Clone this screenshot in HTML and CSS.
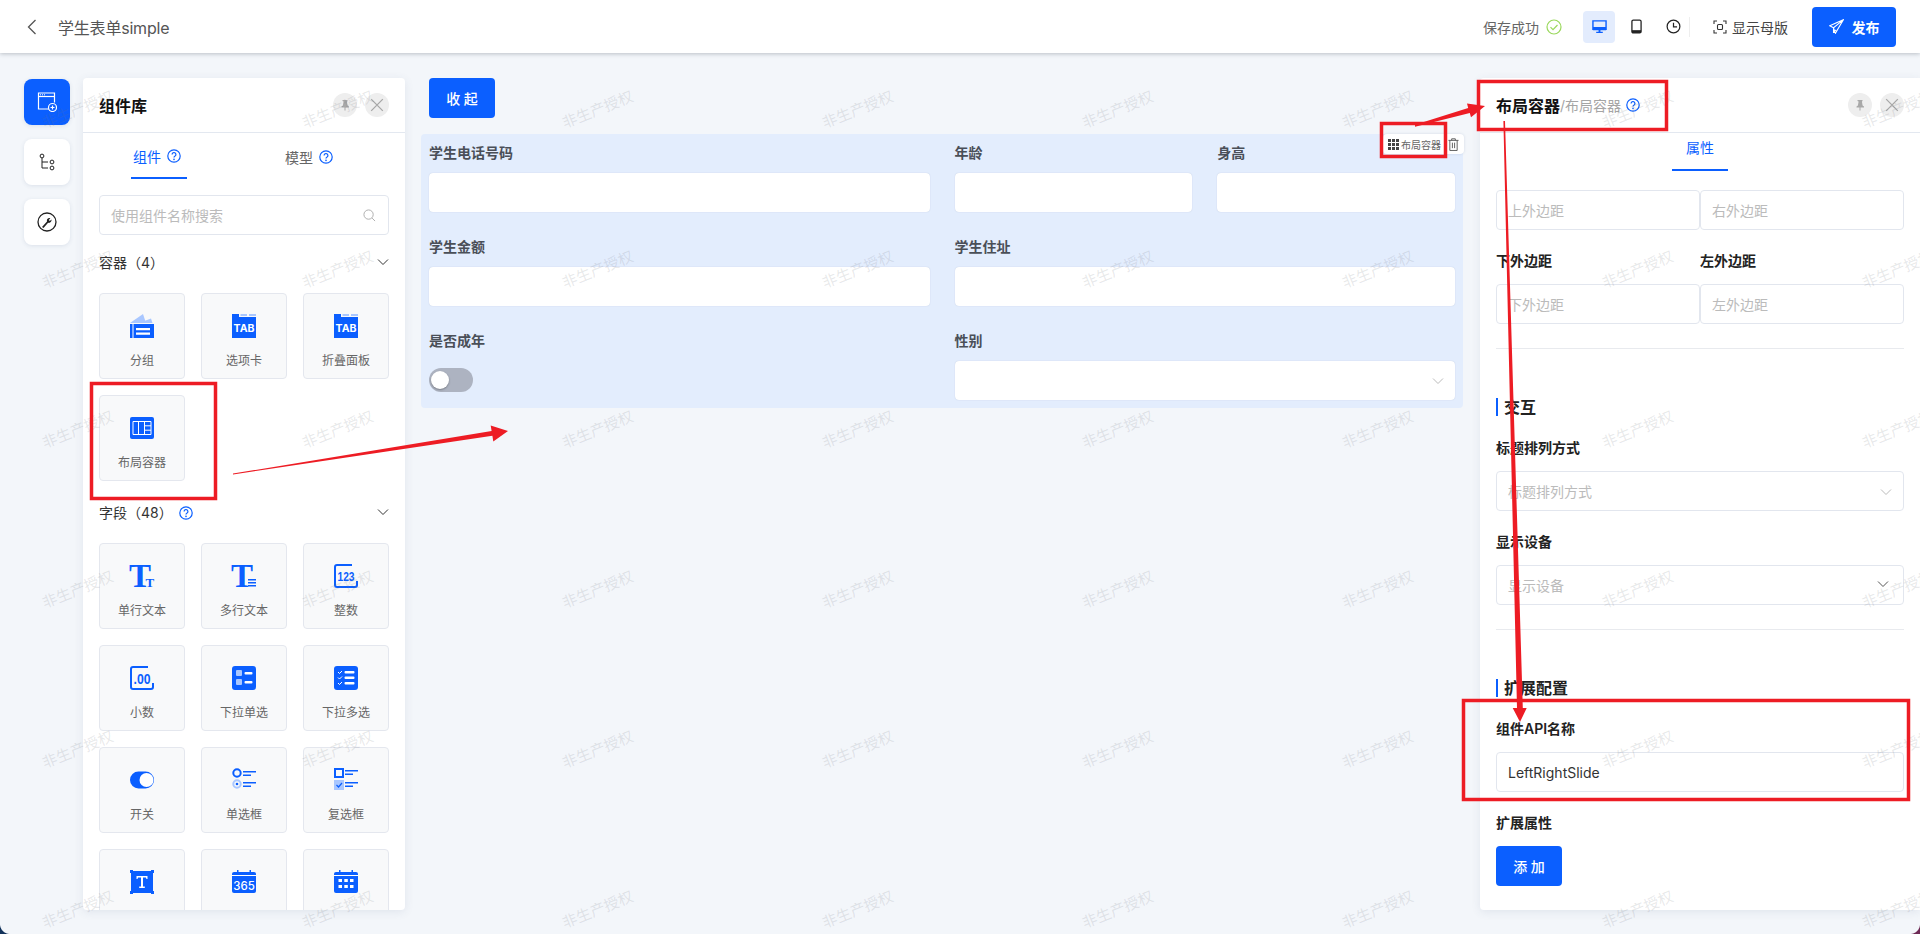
FILE: index.html
```html
<!DOCTYPE html>
<html lang="zh-CN">
<head>
<meta charset="utf-8">
<title>学生表单simple</title>
<link rel="stylesheet" href="styles.css">
</head>
<body>
<svg class="defs" width="0" height="0" aria-hidden="true">
  <symbol id="help" viewBox="0 0 14 14"><circle cx="7" cy="7" r="6.2" fill="none" stroke="currentColor" stroke-width="1.2"/><path d="M5.1 5.5a1.9 1.9 0 1 1 2.9 1.6c-.7.4-1 .8-1 1.5" fill="none" stroke="currentColor" stroke-width="1.2"/><circle cx="7" cy="10.4" r=".8" fill="currentColor"/></symbol>
  <symbol id="chev" viewBox="0 0 12 12"><path d="M1 3.5l5 5 5-5" fill="none" stroke="currentColor" stroke-width="1"/></symbol>
  <symbol id="pin" viewBox="0 0 12 12"><path d="M3.5 1h5v1l-.6.5.7 4 1.4 1v1H2.500v-1l1.400-1 .7-4L3.500 2zM5.500 8.500h1V11.500h-1z" fill="currentColor"/></symbol>
  <symbol id="close" viewBox="0 0 12 12"><path d="M1 1l10 10M11 1L1 11" fill="none" stroke="currentColor" stroke-width="1.100"/></symbol>
</svg>

<header class="topbar">
  <svg class="back" viewBox="0 0 10 16"><path d="M8.500 1L1.500 8l7 7" fill="none" stroke="#555" stroke-width="1.300"/></svg>
  <span class="app-title">学生表单simple</span>
  <div class="top-actions">
    <span class="saved">保存成功</span>
    <svg class="saved-ok" viewBox="0 0 16 16"><circle cx="8" cy="8" r="7" fill="none" stroke="#9ad85c" stroke-width="1.200"/><path d="M4.500 8.200l2.500 2.500 4.500-4.700" fill="none" stroke="#9ad85c" stroke-width="1.200"/></svg>
    <span class="device device-on"><svg viewBox="0 0 16 16" width="15" height="15"><path d="M1 2h14v9H1z" fill="none" stroke="#0b5fff" stroke-width="1.500"/><path d="M1 8.500h14V12H1zM7 12h2v2H7zM4.500 13.500h7V15h-7z" fill="#0b5fff"/></svg></span>
    <span class="device"><svg viewBox="0 0 12 16" width="11" height="15"><rect x="1" y="1" width="10" height="14" rx="1.500" fill="none" stroke="#222" stroke-width="1.400"/><path d="M1 12h10v3H1z" fill="#222"/></svg></span>
    <span class="device"><svg viewBox="0 0 16 16" width="15" height="15"><circle cx="8" cy="8" r="6.800" fill="none" stroke="#222" stroke-width="1.300"/><path d="M8 4v4.300h3.800" fill="none" stroke="#222" stroke-width="1.300"/></svg></span>
    <i class="vline"></i>
    <svg class="scan" viewBox="0 0 14 14"><path d="M1 4V1h3M10 1h3v3M13 10v3h-3M4 13H1v-3" fill="none" stroke="#333" stroke-width="1.100"/><rect x="4.500" y="4.500" width="5" height="5" rx="1" fill="none" stroke="#333" stroke-width="1.100"/></svg>
    <span class="master">显示母版</span>
    <button class="publish"><svg viewBox="0 0 14 14" width="15" height="15"><path d="M13.300 .8L.8 6.300l3.400 1.900L6 13.300zM13.300 .8L4.200 8.200v4l2.500-2" fill="none" stroke="#fff" stroke-width="1"/></svg>发布</button>
  </div>
</header>

<main class="workspace">
  <nav class="rail">
    <a class="rail-btn rail-on"><svg viewBox="0 0 20 20" width="20" height="20"><path d="M12 17H1.500V1h16v9.500" fill="none" stroke="#fff" stroke-width="1.200"/><path d="M1.500 4.500h16" stroke="#fff" stroke-width="1.200"/><path d="M3 2.800h1M5 2.800h1M7 2.800h1" stroke="#fff"/><circle cx="15.500" cy="15.500" r="4" fill="#0b5fff" stroke="#fff" stroke-width="1.200"/><path d="M13.500 15.500h4M15.500 13.500v4" stroke="#fff" stroke-width="1.200"/></svg></a>
    <a class="rail-btn"><svg viewBox="0 0 18 18" width="18" height="18"><circle cx="4" cy="3" r="1.900" fill="none" stroke="#222"/><circle cx="14" cy="9" r="1.900" fill="none" stroke="#222"/><circle cx="14" cy="15" r="1.900" fill="none" stroke="#222"/><path d="M4 5v10h6M4 9h6" fill="none" stroke="#222"/></svg></a>
    <a class="rail-btn"><svg viewBox="0 0 20 20" width="20" height="20"><circle cx="10" cy="10" r="9" fill="none" stroke="#222" stroke-width="1.300"/><path d="M5 15l5-5.500c-.6-2 1-3.800 3.300-3.300l-1.500 1.700 1 1.200 1.700-1.500c.4 2.200-1.400 3.800-3.400 3.200L6.500 16z" fill="#222"/></svg></a>
  </nav>

  <aside class="panel lib">
    <div class="panel-head">
      <span class="panel-title">组件库</span>
      <span class="round round-first"><svg width="12" height="12"><use href="#pin"/></svg></span>
      <span class="round"><svg width="14" height="14"><use href="#close"/></svg></span>
    </div>
    <div class="lib-tabs">
      <div class="tab-cell"><span class="tab tab-on">组件<svg class="help"><use href="#help"/></svg></span></div>
      <div class="tab-cell"><span class="tab">模型<svg class="help"><use href="#help"/></svg></span></div>
    </div>
    <div class="lib-scroll">
      <div class="search"><span>使用组件名称搜索</span><svg viewBox="0 0 14 14" width="13" height="13"><circle cx="6" cy="6" r="5" fill="none" stroke="#aaa"/><path d="M9.800 9.800L13 13" stroke="#aaa"/></svg></div>

      <div class="group-head"><span>容器（4）</span><svg class="chev-dark"><use href="#chev"/></svg></div>
      <div class="cards">
        <div class="card"><svg class="ci" viewBox="0 0 24 24"><path d="M0 9L13 0l3 9z" fill="#a9c7ff"/><path d="M9 9l12-4.500L22.500 9z" fill="#a9c7ff"/><path d="M0 10h24v14H0z" fill="#0b5fff"/><path d="M2.500 10h1v14h-1zM6 14h14v2.200H6zM6 18.500h14v2.200H6z" fill="#fff"/></svg><span>分组</span></div>
        <div class="card"><svg class="ci" viewBox="0 0 24 24"><path d="M0 0h7v3h17v21H0z" fill="#0b5fff"/><path d="M8.500 0h6.500v2H8.500zM17 0h7v2h-7z" fill="#a9c7ff"/><text x="12" y="18" class="ci-tab">TAB</text></svg><span>选项卡</span></div>
        <div class="card"><svg class="ci" viewBox="0 0 24 24"><path d="M0 0h7v3h17v21H0z" fill="#0b5fff"/><path d="M8.500 0h6.500v2H8.500zM17 0h7v2h-7z" fill="#a9c7ff"/><text x="12" y="18" class="ci-tab">TAB</text></svg><span>折叠面板</span></div>
        <div class="card"><svg class="ci" viewBox="0 0 24 24"><rect y="1" width="24" height="22" rx="2" fill="#0b5fff"/><path d="M3 5.500h18v13H3z" fill="#0b5fff" stroke="#fff"/><path d="M8.500 5.500v13M14.500 5.500v13M14.500 9.800H21M14.500 14.200H21" stroke="#fff"/></svg><span>布局容器</span></div>
      </div>

      <div class="group-head"><span>字段（48）<svg class="help help-inline"><use href="#help"/></svg></span><svg class="chev-dark"><use href="#chev"/></svg></div>
      <div class="cards">
        <div class="card"><svg class="ci" viewBox="0 0 24 24"><text x="-1" y="23" class="ci-bigt">T</text><text x="15.500" y="23" class="ci-smallt">T</text></svg><span>单行文本</span></div>
        <div class="card"><svg class="ci" viewBox="0 0 24 24"><text x="-1" y="23" class="ci-bigt">T</text><path d="M16 15h8v1.500h-8zM16 18h8v1.500h-8zM16 21h8v1.500h-8z" fill="#0b5fff"/></svg><span>多行文本</span></div>
        <div class="card"><svg class="ci" viewBox="0 0 24 24"><path d="M18 1H3a2 2 0 0 0-2 2v18a2 2 0 0 0 2 2h18a2 2 0 0 0 2-2v-4" fill="none" stroke="#0b5fff" stroke-width="2"/><text x="3.500" y="17" class="ci-num" textLength="17" lengthAdjust="spacingAndGlyphs">123</text></svg><span>整数</span></div>
        <div class="card"><svg class="ci" viewBox="0 0 24 24"><path d="M18 1H3a2 2 0 0 0-2 2v18a2 2 0 0 0 2 2h18a2 2 0 0 0 2-2v-4" fill="none" stroke="#0b5fff" stroke-width="2"/><text x="3.500" y="17.500" class="ci-num2" textLength="17" lengthAdjust="spacingAndGlyphs">.00</text></svg><span>小数</span></div>
        <div class="card"><svg class="ci" viewBox="0 0 24 24"><rect width="24" height="24" rx="3" fill="#0b5fff"/><rect x="4" y="4" width="6" height="6" rx="1" fill="#a9c7ff"/><rect x="4" y="13" width="6" height="6" rx="1" fill="#a9c7ff"/><rect x="12.500" y="6" width="8" height="2.500" rx="1" fill="#fff"/><rect x="12.500" y="15" width="8" height="2.500" rx="1" fill="#fff"/></svg><span>下拉单选</span></div>
        <div class="card"><svg class="ci" viewBox="0 0 24 24"><rect width="24" height="24" rx="3" fill="#0b5fff"/><path d="M4 6l1.500 1.500L8 5M4 11.500L5.500 13 8 10.500M4 17l1.500 1.500L8 16" fill="none" stroke="#fff"/><rect x="10.500" y="5" width="10" height="2.600" rx="1" fill="#fff"/><rect x="10.500" y="10.500" width="10" height="2.600" rx="1" fill="#fff"/><rect x="10.500" y="16" width="10" height="2.600" rx="1" fill="#fff"/></svg><span>下拉多选</span></div>
        <div class="card"><svg class="ci" viewBox="0 0 24 24"><rect y="3.500" width="24" height="17" rx="8.500" fill="#0b5fff"/><circle cx="16.500" cy="12" r="7" fill="#fff"/></svg><span>开关</span></div>
        <div class="card"><svg class="ci" viewBox="0 0 24 24"><circle cx="5" cy="5" r="3.700" fill="none" stroke="#0b5fff" stroke-width="2"/><circle cx="5" cy="16" r="3.700" fill="none" stroke="#a9c7ff" stroke-width="2"/><circle cx="5" cy="16" r="1.300" fill="#0b5fff"/><path d="M11 3h13v1.500H11zM11 6.500h8V8h-8zM11 14h13v1.500H11zM11 17.500h8V19h-8z" fill="#0b5fff"/></svg><span>单选框</span></div>
        <div class="card"><svg class="ci" viewBox="0 0 24 24"><rect x="1" y="1" width="8" height="8" fill="none" stroke="#0b5fff" stroke-width="2"/><rect y="12" width="10" height="10" fill="#a9c7ff"/><path d="M2.500 17l2 2 3.500-4" fill="none" stroke="#0b5fff" stroke-width="1.200"/><path d="M11 2h13v1.500H11zM11 5.500h8V7h-8zM11 14h13v1.500H11zM11 17.500h8V19h-8z" fill="#0b5fff"/></svg><span>复选框</span></div>
        <div class="card"><svg class="ci" viewBox="0 0 24 24"><path d="M1 1h22v22H1z" fill="#0b5fff"/><path d="M0 0h3v3H0zM21 0h3v3h-3zM0 21h3v3H0zM21 21h3v3h-3z" fill="#0b5fff"/><path d="M6.500 6H17.500v3h-1l-.6-1.500H13v9h1.800V18H9.200v-1.500H11v-9H8.100L7.500 9h-1z" fill="#fff"/></svg></div>
        <div class="card"><svg class="ci" viewBox="0 0 24 24"><rect y="2" width="24" height="21" rx="2" fill="#0b5fff"/><path d="M5 0h1.500v3H5zM17.500 0H19v3h-1.500z" fill="#0b5fff"/><path d="M0 5.500h24" stroke="#fff"/><text x="12" y="19.500" class="ci-cal">365</text></svg></div>
        <div class="card"><svg class="ci" viewBox="0 0 24 24"><rect y="2" width="24" height="21" rx="2" fill="#0b5fff"/><path d="M5 0h1.500v3H5zM17.500 0H19v3h-1.500z" fill="#0b5fff"/><path d="M0 5.500h24" stroke="#fff"/><path d="M4.500 9h3.500v3H4.500zM10.300 9h3.500v3h-3.500zM16 9h3.500v3H16zM4.500 15h3.500v3H4.500zM10.300 15h3.500v3h-3.500zM16 15h3.500v3H16z" fill="#fff"/></svg></div>
      </div>
    </div>
  </aside>

  <section class="canvas">
    <button class="btn btn-collapse">收 起</button>
    <div class="form">
      <div class="chip">
        <span class="chip-name"><svg viewBox="0 0 11 11" width="11" height="11"><path d="M0 0h3v3H0zM4 0h3v3H4zM8 0h3v3H8zM0 4h3v3H0zM4 4h3v3H4zM8 4h3v3H8zM0 8h3v3H0zM4 8h3v3H4zM8 8h3v3H8z" fill="#444"/></svg>布局容器</span>
        <svg viewBox="0 0 12 14" width="11" height="13"><path d="M.5 2.500h11M4 2.500V.8h4v1.700M2 2.500v11h8v-11M4.800 5v6M7.200 5v6" fill="none" stroke="#555"/></svg>
      </div>
      <div class="fcell"><label>学生电话号码</label><div class="finput"></div></div>
      <div class="fpair">
        <div class="fcell"><label>年龄</label><div class="finput"></div></div>
        <div class="fcell"><label>身高</label><div class="finput"></div></div>
      </div>
      <div class="fcell"><label>学生金额</label><div class="finput"></div></div>
      <div class="fcell"><label>学生住址</label><div class="finput"></div></div>
      <div class="fcell"><label>是否成年</label><div class="toggle"><i></i></div></div>
      <div class="fcell"><label>性别</label><div class="finput finput-sel"><svg class="chev"><use href="#chev"/></svg></div></div>
    </div>
  </section>

  <aside class="panel props">
    <div class="panel-head">
      <span class="panel-title">布局容器</span><span class="panel-sub">/布局容器</span><svg class="help help-head"><use href="#help"/></svg>
      <span class="round round-first"><svg width="12" height="12"><use href="#pin"/></svg></span>
      <span class="round"><svg width="14" height="14"><use href="#close"/></svg></span>
    </div>
    <div class="props-tabs"><span class="tab tab-on">属性</span></div>
    <div class="props-body">
      <div class="pair">
        <div class="pinput"><span>上外边距</span></div>
        <div class="pinput"><span>右外边距</span></div>
      </div>
      <div class="pair pair-labeled">
        <div><label class="plabel">下外边距</label><div class="pinput"><span>下外边距</span></div></div>
        <div><label class="plabel">左外边距</label><div class="pinput"><span>左外边距</span></div></div>
      </div>
      <hr class="divider">
      <h3 class="sect">交互</h3>
      <label class="plabel plabel-first">标题排列方式</label>
      <div class="pinput pinput-sel"><span>标题排列方式</span><svg class="chev"><use href="#chev"/></svg></div>
      <label class="plabel plabel-next">显示设备</label>
      <div class="pinput pinput-sel"><span>显示设备</span><svg class="chev chev-up"><use href="#chev"/></svg></div>
      <hr class="divider">
      <h3 class="sect">扩展配置</h3>
      <label class="plabel plabel-first">组件API名称</label>
      <div class="pinput"><span class="val">LeftRightSlide</span></div>
      <label class="plabel plabel-next">扩展属性</label>
      <button class="btn btn-add">添 加</button>
    </div>
  </aside>
</main>

<div class="watermarks" aria-hidden="true">
  <div class="wm-grid">
  <span>非生产授权</span><span>非生产授权</span><span>非生产授权</span><span>非生产授权</span><span>非生产授权</span><span>非生产授权</span><span>非生产授权</span><span>非生产授权</span>
  <span>非生产授权</span><span>非生产授权</span><span>非生产授权</span><span>非生产授权</span><span>非生产授权</span><span>非生产授权</span><span>非生产授权</span><span>非生产授权</span>
  <span>非生产授权</span><span>非生产授权</span><span>非生产授权</span><span>非生产授权</span><span>非生产授权</span><span>非生产授权</span><span>非生产授权</span><span>非生产授权</span>
  <span>非生产授权</span><span>非生产授权</span><span>非生产授权</span><span>非生产授权</span><span>非生产授权</span><span>非生产授权</span><span>非生产授权</span><span>非生产授权</span>
  <span>非生产授权</span><span>非生产授权</span><span>非生产授权</span><span>非生产授权</span><span>非生产授权</span><span>非生产授权</span><span>非生产授权</span><span>非生产授权</span>
  <span>非生产授权</span><span>非生产授权</span><span>非生产授权</span><span>非生产授权</span><span>非生产授权</span><span>非生产授权</span><span>非生产授权</span><span>非生产授权</span>
  </div>
</div>

<svg class="annot" viewBox="0 0 1920 934" aria-hidden="true">
  <g fill="none" stroke="#ed1c24" stroke-width="3.500">
    <rect x="91.500" y="383.500" width="124" height="115"/>
    <rect x="1381.500" y="123.500" width="64" height="33"/>
    <rect x="1478.500" y="81.500" width="188" height="48"/>
    <rect x="1463.500" y="700.500" width="445" height="99"/>
  </g>
  <g fill="#ed1c24">
    <polygon points="233,473.600 491.600,431 490.700,425.500 508,431 493.300,441.500 492.400,435.800 233,474.400"/>
    <polygon points="1415,124.800 1468.200,108 1467,103.500 1485,106 1471,117.300 1469.800,113 1415,126.800"/>
    <polygon points="1503.400,121 1517,708 1512.700,708 1520,722 1526.700,708 1522.800,708 1505,121"/>
  </g>
</svg>
<i class="corner corner-bl"></i>
<i class="corner corner-br"></i>
</body>
</html>
```

FILE: styles.css
```css
* { box-sizing: border-box; }
html, body { margin: 0; height: 100%; }
body {
  position: relative;
  width: 1920px;
  height: 934px;
  overflow: hidden;
  display: flex;
  flex-direction: column;
  background: #f3f6fa;
  color: #333;
  font-family: Inter, "Noto Sans CJK SC", sans-serif;
  font-size: 14px;
}
.defs { position: absolute; }
svg { flex: none; display: block; }

/* top bar */
.topbar {
  flex: none;
  height: 53px;
  display: flex;
  align-items: center;
  padding: 0 24px 0 27px;
  background: #fff;
  box-shadow: 0 1px 4px rgba(40, 50, 70, .28);
  position: relative;
}
.back { width: 10px; height: 16px; }
.app-title { margin-left: 21px; font-size: 16px; letter-spacing: -.2px; color: #555; }
.top-actions { margin-left: auto; display: flex; align-items: center; }
.saved { color: #666; font-size: 14px; }
.saved-ok { width: 16px; height: 16px; margin-left: 7px; }
.device { width: 32px; height: 32px; display: flex; align-items: center; justify-content: center; border-radius: 4px; }
.device-on { background: #e3ecfd; margin-left: 21px; margin-right: 5px; }
.device + .device + .device { margin-left: 5px; }
.vline { width: 1px; height: 20px; background: #eee; }
.scan { width: 14px; height: 14px; margin-left: 23px; }
.master { margin-left: 5px; color: #444; }
.publish {
  margin-left: 24px;
  width: 84px;
  height: 40px;
  display: flex;
  align-items: center;
  justify-content: center;
  gap: 8px;
  border: 0;
  border-radius: 4px;
  background: #0b5fff;
  color: #fff;
  font: 600 14px Inter, "Noto Sans CJK SC", sans-serif;
}

/* layout */
.workspace { flex: 1; min-height: 0; display: flex; align-items: flex-start; padding-top: 25px; }
.rail { width: 46px; margin: 1px 0 0 24px; display: flex; flex-direction: column; gap: 14px; }
.rail-btn {
  width: 46px;
  height: 46px;
  border-radius: 8px;
  background: #fff;
  display: flex;
  align-items: center;
  justify-content: center;
  box-shadow: 0 1px 4px rgba(60, 80, 120, .12);
}
.rail-on { background: #0b5fff; }

.panel {
  height: 832px;
  background: #fff;
  border-radius: 4px;
  box-shadow: 0 2px 10px rgba(60, 80, 120, .1);
  display: flex;
  flex-direction: column;
  overflow: hidden;
}
.lib { width: 322px; margin-left: 13px; }
.props { width: 440px; margin-left: 17px; border-radius: 4px 0 0 4px; }
.panel-head {
  flex: none;
  height: 55px;
  display: flex;
  align-items: center;
  padding: 0 16px;
  border-bottom: 1px solid #e3e8f0;
}
.panel-title { font-size: 16px; font-weight: 600; color: #111; }
.panel-sub { color: #a5a5a5; font-size: 14px; }
.round {
  width: 24px;
  height: 24px;
  border-radius: 50%;
  background: #eee;
  color: #a8a8a8;
  display: flex;
  align-items: center;
  justify-content: center;
  margin-left: 8px;
}
.round-first { margin-left: auto; }
.help { width: 14px; height: 14px; color: #0b5fff; margin-left: 6px; }
.help-head { margin-left: 5px; }
.help-inline { display: inline-block; margin-left: 6px; vertical-align: -2px; }

/* library */
.lib-tabs { flex: none; height: 46px; display: grid; grid-template-columns: 152px 152px; padding-left: 48px; }
.tab-cell { display: flex; height: 46px; }
.tab { display: flex; align-items: center; justify-content: center; width: 56px; color: #666; font-size: 14px; }
.tab-on { color: #0b5fff; border-bottom: 2px solid #0b5fff; }
.lib-tabs .tab { padding: 2px 0 0 2px; justify-content: flex-start; }
.lib-scroll { flex: 1; min-height: 0; overflow: hidden; padding: 16px 16px 0; }
.search {
  height: 40px;
  border: 1px solid #e2e6ee;
  border-radius: 4px;
  padding: 0 12px 0 11px;
  display: flex;
  align-items: center;
  justify-content: space-between;
  color: #bbb;
}
.group-head { height: 22px; display: flex; align-items: center; justify-content: space-between; color: #333; }
.search + .group-head { margin-top: 16px; }
.cards + .group-head { margin-top: 20px; }
.chev-dark { width: 12px; height: 12px; color: #333; }
.cards { margin-top: 20px; display: grid; grid-template-columns: repeat(3, 86px); gap: 16px; }
.card {
  height: 86px;
  background: #f8f9fa;
  border: 1px solid #e4e7ee;
  border-radius: 4px;
  display: flex;
  flex-direction: column;
  align-items: center;
  padding-top: 20px;
  font-size: 12px;
  color: #666;
  line-height: 18px;
}
.card span { margin-top: 14px; }
.ci { width: 24px; height: 24px; overflow: visible; }
.ci-tab { font: 700 10.500px Inter, sans-serif; fill: #fff; text-anchor: middle; }
.ci-bigt { font: 700 33px "Liberation Serif", serif; fill: #0b5fff; }
.ci-smallt { font: 700 13px "Liberation Serif", serif; fill: #0b5fff; }
.ci-num { font: 700 13px "Liberation Sans", sans-serif; fill: #0b5fff; }
.ci-num2 { font: 700 14px "Liberation Sans", sans-serif; fill: #0b5fff; }
.ci-cal { font: 500 11.500px Inter, sans-serif; fill: #fff; text-anchor: middle; }

/* canvas */
.canvas { width: 1042px; margin-left: 16px; }
.btn {
  display: block;
  width: 66px;
  height: 40px;
  border: 0;
  border-radius: 4px;
  background: #0b5fff;
  color: #fff;
  font: 500 14px Inter, "Noto Sans CJK SC", sans-serif;
  white-space: pre;
}
.btn-collapse { margin-left: 8px; }
.form {
  position: relative;
  margin-top: 16px;
  height: 274px;
  padding: 8px;
  background: #e3edfd;
  border-radius: 4px;
  display: grid;
  grid-template-columns: 1fr 1fr;
  grid-auto-rows: 70px;
  column-gap: 25px;
  row-gap: 24px;
}
.fpair { display: grid; grid-template-columns: 1fr 1fr; column-gap: 25px; }
.fcell label { display: block; height: 22px; line-height: 22px; font-weight: 600; color: #4a4f58; margin-bottom: 9px; }
.finput { height: 39px; background: #fff; border-radius: 4px; box-shadow: 0 0 1px rgba(90, 110, 150, .35); position: relative; }
.finput-sel .chev, .pinput-sel .chev { position: absolute; right: 11px; top: 14px; }
.chev { width: 12px; height: 12px; color: #bbb; }
.chev-up { color: #555; top: 12px !important; right: 14px !important; }
.toggle {
  width: 44px;
  height: 24px;
  margin-top: 16px;
  border-radius: 12px;
  background: #adb3c1;
  padding: 3px 2px;
}
.toggle i { display: block; width: 18px; height: 18px; border-radius: 50%; background: #fff; box-shadow: 0 1px 2px rgba(0, 0, 0, .3); }
.chip {
  position: absolute;
  top: 0;
  right: -1px;
  width: 81px;
  height: 20px;
  background: #fff;
  border-radius: 4px;
  display: flex;
  align-items: center;
  padding: 0 5px;
  justify-content: space-between;
  box-shadow: 0 0 3px rgba(90, 110, 150, .2);
}
.chip-name { display: flex; align-items: center; gap: 2px; font-size: 10px; color: #666; white-space: nowrap; }

/* properties */
.props-tabs { flex: none; height: 38px; display: flex; justify-content: center; }
.props-tabs .tab { padding-bottom: 8px; height: 38px; }
.props-body { flex: 1; min-height: 0; padding: 19px 16px 0; }
.pair { display: grid; grid-template-columns: 1fr 1fr; }
.pair-labeled { margin-top: 20px; }
.plabel { display: block; height: 22px; line-height: 22px; font-weight: 600; color: #222; margin-bottom: 12px; }
.plabel-first { margin-top: 21px; }
.plabel-next { margin-top: 20px; }
.pinput {
  position: relative;
  height: 40px;
  border: 1px solid #e2e6ee;
  border-radius: 4px;
  padding-left: 11px;
  display: flex;
  align-items: center;
  color: #bbb;
}
.val { color: #333; }
.divider { margin: 24px 0 49px; border: 0; border-top: 1px solid #e8eaee; height: 0; }
.sect {
  margin: 0;
  height: 18px;
  line-height: 18px;
  padding-left: 6px;
  border-left: 2px solid #0b5fff;
  font-size: 16px;
  font-weight: 600;
  color: #222;
}
.btn-add { margin: 0; }

/* overlays */
.watermarks { position: absolute; left: 0; top: 0; width: 1920px; height: 934px; overflow: hidden; pointer-events: none; }
.wm-grid {
  margin: 28px 0 0 -53px;
  display: grid;
  grid-template-columns: repeat(8, 260px);
  grid-auto-rows: 160px;
}
.wm-grid span {
  display: flex;
  align-items: center;
  justify-content: center;
  font-size: 15px;
  color: rgba(110, 115, 125, .17);
  transform: rotate(-22deg);
}
.annot { position: absolute; left: 0; top: 0; width: 1920px; height: 934px; pointer-events: none; }
.corner { position: absolute; bottom: 0; width: 10px; height: 10px; }
.corner-bl { left: 0; background: radial-gradient(circle at 100% 0, transparent 9.500px, #12325a 10.500px); }
.corner-br { right: 0; background: radial-gradient(circle at 0 0, transparent 9.500px, #6e2a55 10.500px); }
```
